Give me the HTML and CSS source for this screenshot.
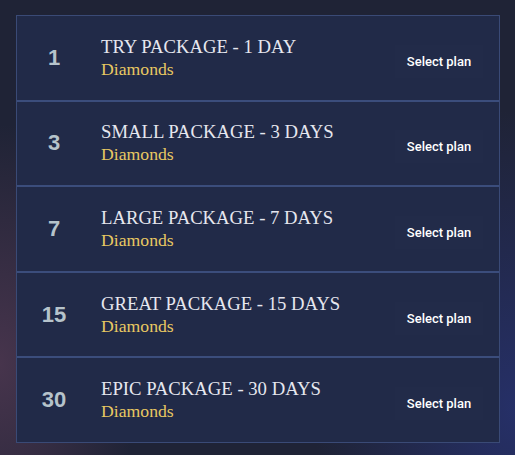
FILE: index.html
```html
<!DOCTYPE html>
<html>
<head>
    <title>Diamond Plans</title>
    <link rel="stylesheet" href="styles.css">
</head>
<body>
    <div class="plans">
        <div class="plan">
            <div class="days">1</div>
            <div class="info">
                <div class="name">TRY PACKAGE - 1 DAY</div>
                <div class="kind">Diamonds</div>
            </div>
            <button class="select">Select plan</button>
        </div>
        <div class="plan">
            <div class="days">3</div>
            <div class="info">
                <div class="name">SMALL PACKAGE - 3 DAYS</div>
                <div class="kind">Diamonds</div>
            </div>
            <button class="select">Select plan</button>
        </div>
        <div class="plan">
            <div class="days">7</div>
            <div class="info">
                <div class="name">LARGE PACKAGE - 7 DAYS</div>
                <div class="kind">Diamonds</div>
            </div>
            <button class="select">Select plan</button>
        </div>
        <div class="plan">
            <div class="days">15</div>
            <div class="info">
                <div class="name">GREAT PACKAGE - 15 DAYS</div>
                <div class="kind">Diamonds</div>
            </div>
            <button class="select">Select plan</button>
        </div>
        <div class="plan">
            <div class="days">30</div>
            <div class="info">
                <div class="name">EPIC PACKAGE - 30 DAYS</div>
                <div class="kind">Diamonds</div>
            </div>
            <button class="select">Select plan</button>
        </div>
    </div>
</body>
</html>
```

FILE: styles.css
```css
body {
    margin: 0;
    padding: 15px 0 0 16px;
    height: 100vh;
    box-sizing: border-box;
    overflow: hidden;
    background-color: #1f2336;
    background-image:
        radial-gradient(ellipse 140px 240px at 0% 80%, rgba(88, 60, 86, 0.7), transparent),
        radial-gradient(ellipse 200px 300px at 100% 90%, rgba(40, 52, 120, 0.75), transparent);
}
.plans {
    width: 482px;
    border: 1px solid #3a4a76;
    background: #212a48;
}
.plan {
    display: flex;
    align-items: center;
    height: 83.6px;
    border-bottom: 2px solid #3b4d7c;
}
.plan:last-child {
    border-bottom: none;
}
.days {
    width: 74px;
    text-align: center;
    font-family: "Liberation Sans", Arial, sans-serif;
    font-weight: bold;
    font-size: 22px;
    color: #b6c3cb;
}
.info {
    flex: 1;
    margin-left: 10px;
    font-family: "Liberation Serif", "Times New Roman", serif;
}
.name {
    font-size: 18.7px;
    line-height: 22px;
    color: #e6e7ef;
}
.kind {
    font-size: 17.7px;
    line-height: 22px;
    color: #e8c862;
}
.select {
    width: 88px;
    height: 33px;
    margin: 7px 16px 0 0;
    border: none;
    background: rgba(255, 255, 255, 0.006);
    font-family: Roboto, "Liberation Sans", sans-serif;
    font-weight: 500;
    font-size: 13px;
    color: #ffffff;
}
```
